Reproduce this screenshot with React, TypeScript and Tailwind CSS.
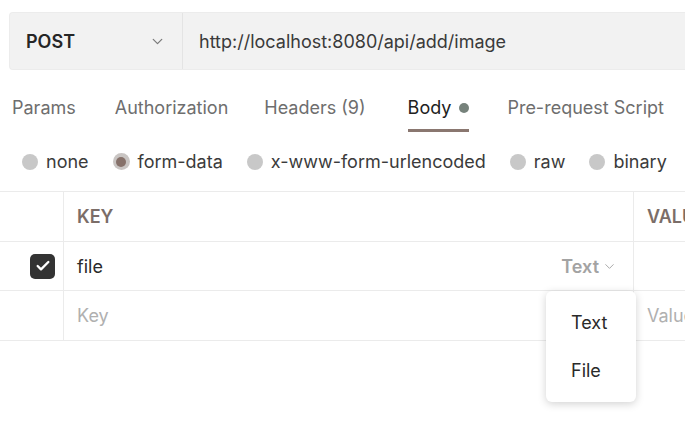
import { ChevronDown, Check } from "lucide-react";

const tabs = [
  { label: "Params", ml: "ml-0" },
  { label: "Authorization", ml: "ml-[39px]" },
  { label: "Headers (9)", ml: "ml-[36px]" },
  { label: "Body", ml: "ml-[42px]" },
  { label: "Pre-request Script", ml: "ml-[38px]" },
];
const bodyTypes = ["none", "form-data", "x-www-form-urlencoded", "raw", "binary"];

function Radio({ label, checked }: { label: string; checked?: boolean }) {
  return (
    <div className="flex items-center gap-[8px]">
      {checked ? (
        <span className="flex size-[17px] items-center justify-center rounded-full bg-[#c9c5c3]">
          <span className="size-[10px] rounded-full bg-[#86716a]" />
        </span>
      ) : (
        <span className="size-[16px] rounded-full bg-[#c8c8c8]" />
      )}
      <span className="text-[#3b3b3b]">{label}</span>
    </div>
  );
}

export default function App() {
  return (
    <div className="h-[433px] w-[685px] overflow-hidden bg-white font-['Inter',sans-serif] text-[18px]">
      <div className="pl-[9px] pt-[12px]">
        <div className="flex h-[58px] rounded-l-[4px] border border-r-0 border-[#ececec] bg-[#f2f2f2]">
          <div className="flex w-[173px] items-center justify-between border-r border-[#e4e4e4] pl-[16px] pr-[16px]">
            <span className="font-semibold text-[#262626]">POST</span>
            <ChevronDown className="size-[17px] text-[#7a7a7a]" strokeWidth={1.75} />
          </div>
          <div className="flex items-center whitespace-nowrap pl-[16px] text-[#3a3a3a]">http://localhost:8080/api/add/image</div>
        </div>
      </div>

      <div className="flex h-[62px] items-end pl-[12px]">
        {tabs.map((t) => (
          <div key={t.label} className={`flex flex-col ${t.ml}`}>
            <div className={`flex items-center gap-[8px] whitespace-nowrap pb-[8px] ${t.label === "Body" ? "text-[#212121]" : "text-[#6e6e6e]"}`}>
              {t.label}
              {t.label === "Body" && <span className="size-[10px] rounded-full bg-[#76827b]" />}
            </div>
            <div className={`h-[3px] ${t.label === "Body" ? "bg-[#8a7770]" : "bg-transparent"}`} />
          </div>
        ))}
      </div>

      <div className="flex h-[59px] items-center gap-[24px] pl-[22px]">
        {bodyTypes.map((b) => (
          <Radio key={b} label={b} checked={b === "form-data"} />
        ))}
      </div>

      <div className="border-t border-[#ebebeb]">
        <div className="grid h-[50px] grid-cols-[64px_570px_1fr] border-b border-[#ebebeb]">
          <div className="border-r border-[#ebebeb]" />
          <div className="flex items-center border-r border-[#ebebeb] pl-[13px] font-semibold text-[#7b6d68]">KEY</div>
          <div className="flex items-center whitespace-nowrap pl-[13px] font-semibold text-[#7b6d68]">VALUE</div>
        </div>
        <div className="grid h-[49px] grid-cols-[64px_570px_1fr] border-b border-[#ebebeb]">
          <div className="flex items-center justify-end border-r border-[#ebebeb] pr-[8px]">
            <span className="flex size-[25px] items-center justify-center rounded-[5px] bg-[#333333]">
              <Check className="size-[16px] text-white" strokeWidth={3.5} />
            </span>
          </div>
          <div className="flex items-center justify-between border-r border-[#ebebeb] pl-[13px] pr-[16px]">
            <span className="text-[#2a2a2a]">file</span>
            <span className="flex items-center gap-[3px] font-semibold text-[#a3a3a3]">
              Text
              <ChevronDown className="size-[15px]" strokeWidth={1.5} />
            </span>
          </div>
          <div />
        </div>
        <div className="relative grid h-[50px] grid-cols-[64px_570px_1fr] border-b border-[#ebebeb]">
          <div className="border-r border-[#ebebeb]" />
          <div className="flex items-center border-r border-[#ebebeb] pl-[13px] text-[#b0b0b0]">Key</div>
          <div className="flex items-center whitespace-nowrap pl-[13px] text-[#b0b0b0]">Value</div>
          <div className="absolute left-[546px] top-[0px] flex h-[111px] w-[90px] flex-col rounded-[6px] bg-white pl-[25px] pt-[18px] shadow-[0_2px_8px_rgba(0,0,0,0.18)]">
            <div className="h-[48px] text-[#2a2a2a]">Text</div>
            <div className="text-[#2a2a2a]">File</div>
          </div>
        </div>
      </div>
    </div>
  );
}
